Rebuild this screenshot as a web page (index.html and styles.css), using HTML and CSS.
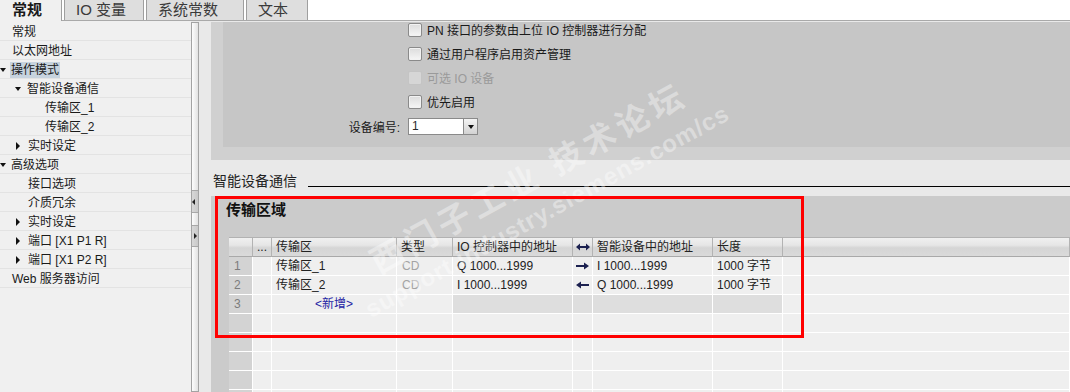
FILE: index.html
```html
<!DOCTYPE html>
<html lang="zh-CN">
<head>
    <meta charset="UTF-8">
    <title>属性 - 常规</title>
    <link rel="stylesheet" href="styles.css">
</head>
<body>
<div id="tabs">
    <div class="tab active">常规</div>
    <div class="tab t_io">IO 变量</div>
    <div class="tab t_const">系统常数</div>
    <div class="tab t_text">文本</div>
</div>
<div id="main">
    <div id="nav">
        <div class="nav_row">常规</div>
        <div class="nav_row">以太网地址</div>
        <div class="nav_row"><span class="tw open l0"></span><span class="selected">操作模式</span></div>
        <div class="nav_row l1"><span class="tw open"></span>智能设备通信</div>
        <div class="nav_row l2">传输区_1</div>
        <div class="nav_row l2">传输区_2</div>
        <div class="nav_row l1"><span class="tw closed"></span>实时设定</div>
        <div class="nav_row"><span class="tw open l0"></span>高级选项</div>
        <div class="nav_row l1">接口选项</div>
        <div class="nav_row l1">介质冗余</div>
        <div class="nav_row l1"><span class="tw closed"></span>实时设定</div>
        <div class="nav_row l1"><span class="tw closed"></span>端口 [X1 P1 R]</div>
        <div class="nav_row l1"><span class="tw closed"></span>端口 [X1 P2 R]</div>
        <div class="nav_row">Web 服务器访问</div>
    </div>
    <div id="splitter">
        <div class="split_btn"><span class="arr_left"></span></div>
        <div class="split_btn second"><span class="arr_right"></span></div>
    </div>
    <div id="content">
        <div id="options_box">
            <div id="options_inner">
                <div class="check_row"><span class="check"></span><span class="check_text">PN 接口的参数由上位 IO 控制器进行分配</span></div>
                <div class="check_row"><span class="check"></span><span class="check_text">通过用户程序启用资产管理</span></div>
                <div class="check_row disabled"><span class="check"></span><span class="check_text">可选 IO 设备</span></div>
                <div class="check_row"><span class="check"></span><span class="check_text">优先启用</span></div>
                <div class="select_row">
                    <span class="select_label">设备编号:</span>
                    <div class="select">
                        <span class="select_value">1</span>
                        <span class="select_btn"><span class="arr_down"></span></span>
                    </div>
                </div>
            </div>
        </div>
        <div class="section_head">
            <span class="section_title">智能设备通信</span>
            <div class="section_line"></div>
        </div>
        <div id="transfer_box">
            <div class="transfer_title">传输区域</div>
            <div id="transfer_table">
                <div class="th"></div>
                <div class="th">...</div>
                <div class="th">传输区</div>
                <div class="th">类型</div>
                <div class="th">IO 控制器中的地址</div>
                <div class="th arrow_cell">
                    <svg width="14" height="8" viewBox="0 0 14 8"><path d="M0 4L4 0.5V3h6V0.5L14 4 10 7.5V5H4v2.5z" fill="#1c2150"/></svg>
                </div>
                <div class="th">智能设备中的地址</div>
                <div class="th">长度</div>
                <div class="th"></div>

                <div class="td num">1</div>
                <div class="td"></div>
                <div class="td">传输区_1</div>
                <div class="td dim">CD</div>
                <div class="td">Q 1000...1999</div>
                <div class="td arrow_cell">
                    <svg width="13" height="8" viewBox="0 0 13 8"><path d="M0 3h8V0.5L13 4 8 7.5V5H0z" fill="#1c2150"/></svg>
                </div>
                <div class="td">I 1000...1999</div>
                <div class="td">1000 字节</div>
                <div class="td"></div>

                <div class="td num">2</div>
                <div class="td"></div>
                <div class="td">传输区_2</div>
                <div class="td dim">CD</div>
                <div class="td">I 1000...1999</div>
                <div class="td arrow_cell">
                    <svg width="13" height="8" viewBox="0 0 13 8"><path d="M13 3H5V0.5L0 4 5 7.5V5h8z" fill="#1c2150"/></svg>
                </div>
                <div class="td">Q 1000...1999</div>
                <div class="td">1000 字节</div>
                <div class="td"></div>

                <div class="td num">3</div>
                <div class="td"></div>
                <div class="td add_new">&lt;新增&gt;</div>
                <div class="td"></div>
                <div class="td shade"></div>
                <div class="td shade"></div>
                <div class="td shade"></div>
                <div class="td shade"></div>
                <div class="td"></div>

                <div class="td num"></div><div class="td"></div><div class="td"></div><div class="td"></div><div class="td"></div><div class="td"></div><div class="td"></div><div class="td"></div><div class="td"></div>
                <div class="td num"></div><div class="td"></div><div class="td"></div><div class="td"></div><div class="td"></div><div class="td"></div><div class="td"></div><div class="td"></div><div class="td"></div>
                <div class="td num"></div><div class="td"></div><div class="td"></div><div class="td"></div><div class="td"></div><div class="td"></div><div class="td"></div><div class="td"></div><div class="td"></div>
                <div class="td num"></div><div class="td"></div><div class="td"></div><div class="td"></div><div class="td"></div><div class="td"></div><div class="td"></div><div class="td"></div><div class="td"></div>
                <div class="td num"></div><div class="td"></div><div class="td"></div><div class="td"></div><div class="td"></div><div class="td"></div><div class="td"></div><div class="td"></div><div class="td"></div>
            </div>
        </div>
    </div>
</div>
<div class="watermark">
    <div class="wm_big">西门子工业&nbsp;技术论坛</div>
    <div class="wm_small">support.industry.siemens.com/cs</div>
</div>
<div class="annotation"></div>
</body>
</html>
```

FILE: styles.css
```css
body{
    margin: 0;
    width: 1070px;
    height: 392px;
    overflow: hidden;
    position: relative;
    background-color: #e9e9e9;
    color: #1a1a1a;
    font-family: "Liberation Sans", "Noto Sans CJK SC", sans-serif;
    font-size: 12px;
}
#tabs{
    display: flex;
    height: 20px;
    background-color: #fff;
    border-bottom: 1px solid #a9a9a9;
}
.tab{
    box-sizing: border-box;
    height: 20px;
    padding-left: 11px;
    margin-left: 2px;
    line-height: 19px;
    font-size: 15px;
    color: #3a3a3a;
    background-color: #dedede;
    border-left: 1px solid #9f9f9f;
    border-right: 1px solid #9f9f9f;
    white-space: nowrap;
}
.tab.active{
    width: 62px;
    height: 21px;
    margin: 0 0 -1px 0;
    padding-left: 12px;
    border-left: none;
    background-color: #f0f0f0;
    font-weight: bold;
    color: #1a1a1a;
}
.t_io{
    width: 80px;
}
.t_const{
    width: 98px;
}
.t_text{
    width: 62px;
}
#main{
    display: flex;
    height: 371px;
}
#nav{
    width: 191px;
    flex: none;
    background-color: #f0f0f0;
    padding-top: 1px;
}
.nav_row{
    box-sizing: border-box;
    height: 19px;
    line-height: 18px;
    padding-top: 1px;
    padding-left: 12px;
    border-bottom: 1px solid #e3e3e3;
    display: flex;
    align-items: center;
    white-space: nowrap;
}
.nav_row.l1{
    padding-left: 28px;
}
.nav_row.l2{
    padding-left: 45px;
}
.tw{
    flex: none;
    width: 0;
    height: 0;
}
.tw.open{
    border-left: 3.5px solid transparent;
    border-right: 3.5px solid transparent;
    border-top: 4px solid #111;
    margin-left: -13px;
    margin-right: 6px;
}
.tw.open.l0{
    margin-left: -12px;
    margin-right: 5px;
}
.tw.closed{
    border-top: 4px solid transparent;
    border-bottom: 4px solid transparent;
    border-left: 4px solid #111;
    margin-left: -12px;
    margin-right: 8px;
}
.selected{
    background-color: #c7d3de;
    line-height: 16px;
    padding: 0 1px;
    margin-left: -1px;
}
#splitter{
    box-sizing: border-box;
    width: 8px;
    flex: none;
    margin-top: 1px;
    border: 1px solid #a3a3a3;
    background: linear-gradient(to right, #fdfdfd, #e2e2e2);
}
.split_btn{
    box-sizing: border-box;
    height: 23px;
    margin-top: 167px;
    border-top: 1px solid #a8a8a8;
    border-bottom: 1px solid #a8a8a8;
    background: linear-gradient(to right, #d8d8d8, #c9c9c9);
    display: flex;
    align-items: center;
}
.split_btn.second{
    height: 22px;
    margin-top: 12px;
}
.arr_left{
    width: 0;
    height: 0;
    border-top: 3px solid transparent;
    border-bottom: 3px solid transparent;
    border-right: 3px solid #222;
}
.arr_right{
    width: 0;
    height: 0;
    border-top: 3px solid transparent;
    border-bottom: 3px solid transparent;
    border-left: 3px solid #222;
    margin-left: 2px;
}
#content{
    flex: 1;
    display: flex;
    flex-direction: column;
    padding-left: 12px;
    min-width: 0;
}
#options_box{
    box-sizing: border-box;
    height: 138px;
    margin-top: 1px;
    padding-left: 12px;
    background-color: #d0d0d0;
}
#options_inner{
    height: 125px;
    background-color: #c6c6c6;
}
.check_row{
    box-sizing: border-box;
    height: 24px;
    padding-top: 1px;
    padding-left: 185px;
    display: flex;
    align-items: flex-start;
    white-space: nowrap;
}
.check_text{
    line-height: 16px;
}
.check{
    box-sizing: border-box;
    width: 14px;
    height: 14px;
    flex: none;
    margin-right: 5px;
    border: 1px solid #8a8a8a;
    border-radius: 2px;
    background: linear-gradient(#dcdcdc, #f6f6f6);
    box-shadow: inset 0 0 0 1px #f2f2f2;
}
.check_row.disabled{
    color: #9a9a9a;
}
.check_row.disabled .check{
    border-color: #c4c4c4;
    background: #d6d6d6;
    box-shadow: none;
}
.select_row{
    display: flex;
    align-items: center;
    height: 17px;
}
.select_label{
    width: 177px;
    text-align: right;
    margin-right: 8px;
}
.select{
    display: flex;
    height: 17px;
}
.select_value{
    box-sizing: border-box;
    width: 55px;
    height: 17px;
    padding-left: 3px;
    line-height: 15px;
    background-color: #fff;
    border: 1px solid #8a8a8a;
    border-right: none;
    color: #2b2b2b;
}
.select_btn{
    box-sizing: border-box;
    width: 15px;
    height: 17px;
    border: 1px solid #8a8a8a;
    background: linear-gradient(#f4f4f4, #d2d2d2);
    display: flex;
    align-items: center;
    justify-content: center;
}
.arr_down{
    width: 0;
    height: 0;
    border-left: 3.5px solid transparent;
    border-right: 3.5px solid transparent;
    border-top: 4px solid #111;
}
.section_head{
    box-sizing: border-box;
    height: 36px;
    padding-top: 12px;
    display: flex;
    align-items: flex-start;
}
.section_title{
    padding-left: 2px;
    font-size: 14px;
    line-height: 18px;
    color: #222;
    white-space: nowrap;
}
.section_line{
    flex: 1;
    margin-left: 11px;
    margin-top: 14px;
    border-top: 1px solid #000;
}
#transfer_box{
    flex: 1;
    background-color: #cbcbcb;
    padding-top: 4px;
    min-height: 0;
}
.transfer_title{
    height: 20px;
    line-height: 20px;
    padding-left: 15px;
    margin-bottom: 17px;
    font-size: 15px;
    font-weight: bold;
    color: #111;
}
#transfer_table{
    margin-left: 18px;
    display: grid;
    grid-template-columns: 24px 19px 125px 56px 120px 20px 120px 70px 1fr;
    grid-auto-rows: 19px;
    border-top: 1px solid #b2b2b2;
}
.th, .td{
    box-sizing: border-box;
    padding-left: 4px;
    line-height: 19px;
    white-space: nowrap;
    overflow: hidden;
}
.th{
    background: linear-gradient(#f0f0f0 0%, #e6e6e6 40%, #d5d5d5 55%, #dadada 100%);
    border-right: 1px solid #b3b3b3;
    border-bottom: 1px solid #a9a9a9;
    color: #222;
}
.td{
    background-color: #efefef;
    border-right: 1px solid #fff;
    border-bottom: 1px solid #fff;
    color: #222;
}
.td.num{
    background-color: #d3d3d3;
    color: #7c7c7c;
    padding-left: 5px;
}
.td.dim{
    color: #a3a3a3;
    padding-left: 5px;
}
.td.shade{
    background-color: #dedede;
}
.td.add_new{
    text-align: center;
    padding-left: 0;
    color: #2424a4;
}
.arrow_cell{
    padding-left: 0;
    display: flex;
    align-items: center;
    justify-content: center;
}
.watermark{
    position: absolute;
    left: 537px;
    top: 193px;
    transform: translate(-50%, -50%) rotate(-29deg);
    text-align: center;
    color: rgba(255, 255, 255, 0.38);
    font-weight: bold;
    white-space: nowrap;
    pointer-events: none;
}
.wm_big{
    font-size: 33px;
    line-height: 38px;
    letter-spacing: 5px;
}
.wm_small{
    font-size: 24px;
    line-height: 28px;
    letter-spacing: 1px;
    margin-top: 4px;
}
.annotation{
    position: absolute;
    left: 215px;
    top: 196px;
    width: 589px;
    height: 142px;
    box-sizing: border-box;
    border: 3px solid #ff0000;
    pointer-events: none;
}
```
